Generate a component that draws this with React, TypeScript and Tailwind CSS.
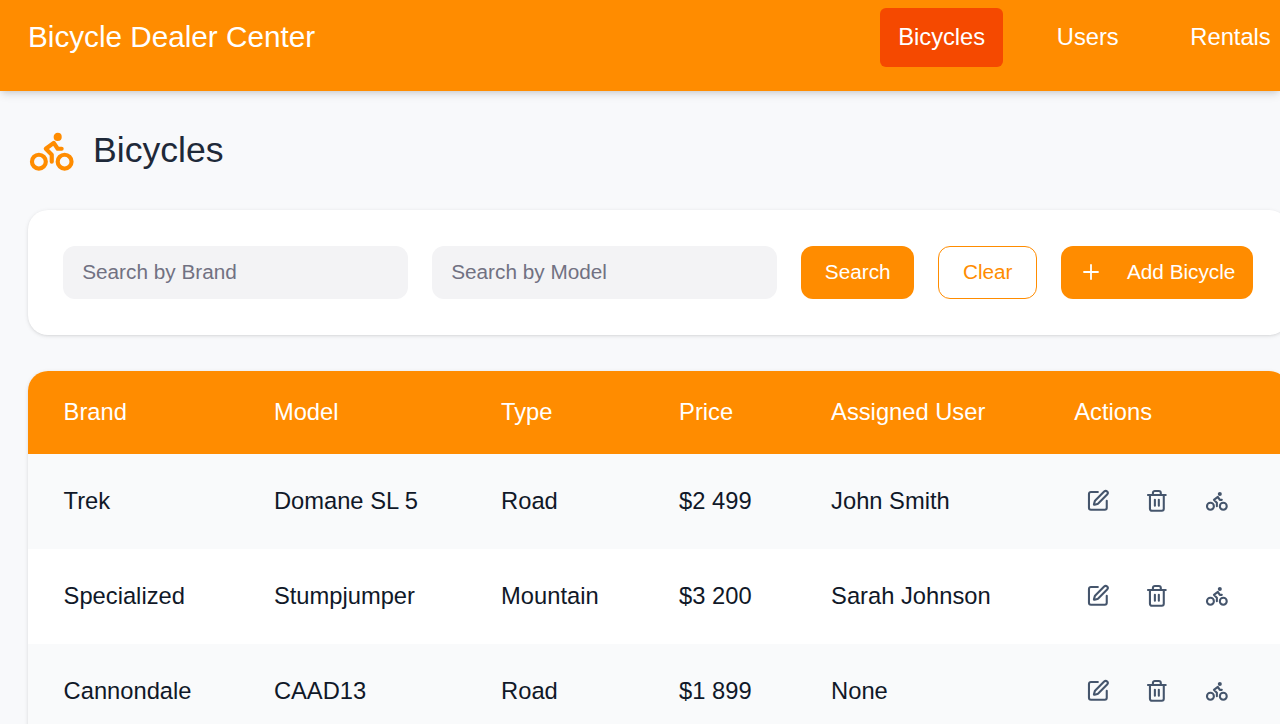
import React from 'react';
import { Bike, Plus, SquarePen, Trash2 } from 'lucide-react';

const navItems = ['Bicycles', 'Users', 'Rentals'];

const columns = [
  { label: 'Brand', width: 'w-[210.3px]' },
  { label: 'Model', width: 'w-[227.2px]' },
  { label: 'Type', width: 'w-[178px]' },
  { label: 'Price', width: 'w-[152px]' },
  { label: 'Assigned User', width: 'w-[243.2px]' },
  { label: 'Actions', width: 'w-[250.3px]' },
];

const bicycles = [
  ['Trek', 'Domane SL 5', 'Road', '$2 499', 'John Smith'],
  ['Specialized', 'Stumpjumper', 'Mountain', '$3 200', 'Sarah Johnson'],
  ['Cannondale', 'CAAD13', 'Road', '$1 899', 'None'],
];

function Header() {
  return (
    <header className="flex h-[91px] items-start bg-[#ff8c00] pl-7 text-white shadow-[0_4px_9px_-1px_rgba(0,0,0,0.12),0_2px_6px_-2px_rgba(0,0,0,0.12)]">
      <div className="w-[852.4px] shrink-0 pt-[15px] text-[29.7px] leading-[44px]">Bicycle Dealer Center</div>
      <nav className="flex shrink-0 gap-9 pt-2">
        {navItems.map((item, i) => (
          <a
            key={item}
            className={`rounded-md px-[17.8px] text-[23.73px] leading-[59px] ${i === 0 ? 'bg-[#f54900]' : ''}`}
          >
            {item}
          </a>
        ))}
      </nav>
    </header>
  );
}

function SearchBar() {
  const input =
    'h-[53px] w-[345px] shrink-0 rounded-xl bg-[#f3f3f5] px-[19px] pb-0.5 text-[20.76px] text-[#1e2939] outline-none placeholder:text-[#717182] placeholder:opacity-100';
  const button = 'flex h-[53px] shrink-0 items-center justify-center rounded-xl pb-0.5 text-[20.76px]';
  return (
    <section className="flex h-[125px] w-[1261px] items-center gap-6 rounded-[20px] bg-white px-[35.6px] shadow-[0_1px_4px_rgba(0,0,0,0.1),0_1px_3px_-1px_rgba(0,0,0,0.1)]">
      <input className={input} placeholder="Search by Brand" />
      <input className={input} placeholder="Search by Model" />
      <button className={`${button} w-[113px] bg-[#ff8c00] text-white`}>Search</button>
      <button className={`${button} w-[99px] border border-[#ff8c00] bg-white text-[#ff8c00]`}>Clear</button>
      <button className={`${button} w-[192px] gap-6 bg-[#ff8c00] text-white`}>
        <Plus size={24} strokeWidth={1.8} />
        <span>Add Bicycle</span>
      </button>
    </section>
  );
}

function BicycleTable() {
  return (
    <section className="w-[1261px] overflow-hidden rounded-t-[20px] bg-white shadow-[0_1px_4px_rgba(0,0,0,0.1),0_1px_3px_-1px_rgba(0,0,0,0.1)]">
      <table className="w-full table-fixed border-collapse text-left text-[23.73px]">
        <thead className="bg-[#ff8c00] text-white">
          <tr className="h-[83px]">
            {columns.map((c) => (
              <th key={c.label} className={`${c.width} py-0 pr-0 pl-9 font-normal`}>
                {c.label}
              </th>
            ))}
          </tr>
        </thead>
        <tbody className="text-[#101828]">
          {bicycles.map((row) => (
            <tr key={row[0]} className="h-[95px] odd:bg-[#f9fafb]">
              {row.map((cell, i) => (
                <td key={i} className="py-0 pr-0 pl-9">
                  {cell}
                </td>
              ))}
              <td className="pt-0 pr-0 pb-px pl-[47.8px]">
                <div className="flex items-center gap-[35.6px] text-[#45556c]">
                  <SquarePen size={23.73} strokeWidth={2.1} />
                  <Trash2 size={23.73} strokeWidth={2.1} />
                  <Bike size={23.73} strokeWidth={2.1} />
                </div>
              </td>
            </tr>
          ))}
        </tbody>
      </table>
    </section>
  );
}

export default function App() {
  return (
    <div className="h-[724px] w-full overflow-hidden bg-[#f8f9fb] font-['Liberation_Sans',Arial,sans-serif]">
      <Header />
      <main className="flex flex-col pl-[27.6px]">
        <div className="flex h-[119px] items-center gap-[18px] text-[#1e2939]">
          <Bike size={47.5} strokeWidth={2.1} className="mt-px text-[#ff8c00]" />
          <h1 className="text-[35.6px]">Bicycles</h1>
        </div>
        <SearchBar />
        <div className="h-9 shrink-0" />
        <BicycleTable />
      </main>
    </div>
  );
}
